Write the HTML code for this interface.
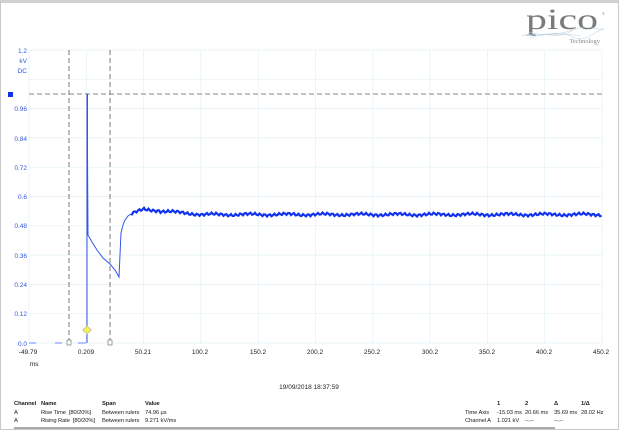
<!DOCTYPE html><html><head><style>
body{margin:0;width:619px;height:430px;background:#fff;overflow:hidden;font-family:"Liberation Sans",sans-serif;position:relative}
.frame{position:absolute;left:0;top:0;border:1px solid #c8c8c8;border-top:3px solid #d0d0d0;box-sizing:border-box;width:619px;height:430px}
.t{position:absolute;font-size:5.8px;color:#222;white-space:nowrap;letter-spacing:-0.1px}
.b{font-weight:bold}
</style></head><body>
<div class="frame"></div>
<svg width="619" height="430" style="position:absolute;left:0;top:0" font-family="Liberation Sans, sans-serif">
<g id="grid" stroke="#e3f0f6" stroke-width="0.7"></g>
<line x1="29" y1="94" x2="602" y2="94" stroke="#888" stroke-dasharray="5,3" stroke-width="1"/>
<line x1="69" y1="50" x2="69" y2="343" stroke="#777" stroke-dasharray="5,3" stroke-width="1"/>
<line x1="110" y1="50" x2="110" y2="343" stroke="#777" stroke-dasharray="5,3" stroke-width="1"/>
<g stroke="#6688ff" stroke-width="1"><line x1="29" y1="343" x2="36" y2="343"/><line x1="55" y1="343" x2="62" y2="343"/><line x1="78" y1="343" x2="86" y2="343"/></g>
<path d="M87 343 L87 94 L87.5 94 L87.5 155 L88 235 L92 242 L97 250 L103 258 L110 264 L115 270 L119 277 L120 255 L121 233 L123 225 L125 220 L128 216 L131 214" fill="none" stroke="#3355ee" stroke-width="1"/>
<path id="noise" fill="none" stroke="#1133ee" stroke-width="2.2"/>
<rect x="84" y="327" width="6" height="6" fill="#f5f055" stroke="#aaa" stroke-width="0.6" transform="rotate(45 87 330)"/>
<rect x="67" y="340" width="4" height="5" fill="#fff" stroke="#777" stroke-width="0.7"/>
<rect x="108" y="340" width="4" height="5" fill="#fff" stroke="#777" stroke-width="0.7"/>
<rect x="8" y="92" width="5" height="5" fill="#1133ee"/>
<g font-size="6.5" fill="#3355dd" text-anchor="end">
<text x="27" y="53">1.2</text><text x="27" y="63">kV</text><text x="27" y="73">DC</text>
<text x="27" y="111">0.96</text><text x="27" y="141">0.84</text><text x="27" y="170">0.72</text><text x="27" y="199">0.6</text><text x="27" y="228">0.48</text><text x="27" y="258">0.36</text><text x="27" y="287">0.24</text><text x="27" y="316">0.12</text><text x="27" y="346">0.0</text>
</g>
<g font-size="6.5" fill="#222" text-anchor="middle">
<text x="28" y="354">-49.79</text><text x="86" y="354">0.209</text><text x="143" y="354">50.21</text><text x="200" y="354">100.2</text><text x="258" y="354">150.2</text><text x="315" y="354">200.2</text><text x="372" y="354">250.2</text><text x="430" y="354">300.2</text><text x="487" y="354">350.2</text><text x="544" y="354">400.2</text><text x="601" y="354">450.2</text>
<text x="34" y="366">ms</text>
<text x="309" y="389">19/09/2018 18:37:59</text>
</g>
<text x="526" y="29" font-family="Liberation Serif, serif" font-size="30" fill="#7a7a7a" textLength="72" lengthAdjust="spacingAndGlyphs">pico</text>
<text x="602" y="15" font-size="4" fill="#999">®</text>
<text x="600" y="43" font-family="Liberation Serif, serif" font-size="6.5" fill="#888" text-anchor="end">Technology</text>
<g stroke="#b8cfe0" stroke-width="0.5" fill="none"><path d="M522 36 C540 30,555 40,570 32 S590 28,604 30"/><path d="M525 34 C540 40,555 28,570 36 S590 34,604 28"/><path d="M530 38 C545 32,558 36,572 30"/><path d="M528 32 C548 38,560 32,580 36"/></g>
<line x1="14" y1="428" x2="555" y2="428" stroke="#555" stroke-width="1"/>
</svg>
<div class="t b" style="left:14px;top:401px">Channel</div><div class="t b" style="left:41px;top:401px">Name</div><div class="t b" style="left:102px;top:401px">Span</div><div class="t b" style="left:145px;top:401px">Value</div>
<div class="t" style="left:14px;top:410px">A</div><div class="t" style="left:41px;top:410px">Rise Time &nbsp;[80/20%]</div><div class="t" style="left:102px;top:410px">Between rulers</div><div class="t" style="left:145px;top:410px">74.96 µs</div>
<div class="t" style="left:14px;top:418px">A</div><div class="t" style="left:41px;top:418px">Rising Rate &nbsp;[80/20%]</div><div class="t" style="left:102px;top:418px">Between rulers</div><div class="t" style="left:145px;top:418px">9.271 kV/ms</div>
<div class="t b" style="left:497px;top:401px">1</div><div class="t b" style="left:525px;top:401px">2</div><div class="t b" style="left:554px;top:401px">Δ</div><div class="t b" style="left:581px;top:401px">1/Δ</div>
<div class="t" style="left:465px;top:410px">Time Axis</div><div class="t" style="left:497px;top:410px">-15.03 ms</div><div class="t" style="left:525px;top:410px">20.66 ms</div><div class="t" style="left:554px;top:410px">35.69 ms</div><div class="t" style="left:581px;top:410px">28.02 Hz</div>
<div class="t" style="left:465px;top:418px">Channel A</div><div class="t" style="left:497px;top:418px">1.021 kV</div><div class="t" style="left:525px;top:418px">--.--</div><div class="t" style="left:554px;top:418px">--.--</div>
<script>
var g=document.getElementById('grid'),s='';
for(var i=0;i<=10;i++){var x=29+i*57.3;s+='<line x1="'+x+'" y1="50" x2="'+x+'" y2="343"/>';}
for(var j=0;j<=10;j++){var y=50+j*29.3;s+='<line x1="29" y1="'+y+'" x2="602" y2="'+y+'"/>';}
g.innerHTML=s;
var d='M131 214';
for(var x=132;x<=602;x+=1.5){var base=x<160?209+(x-132)*0.05:(x<200?211+(x-160)*0.08:214.5);
if(x<145)base=214-(x-131)*0.35;
d+=' L'+x+' '+(base+Math.sin(x*1.3)*1.2+Math.sin(x*0.17)*0.8).toFixed(1);}
document.getElementById('noise').setAttribute('d',d);
</script>
</body></html>
